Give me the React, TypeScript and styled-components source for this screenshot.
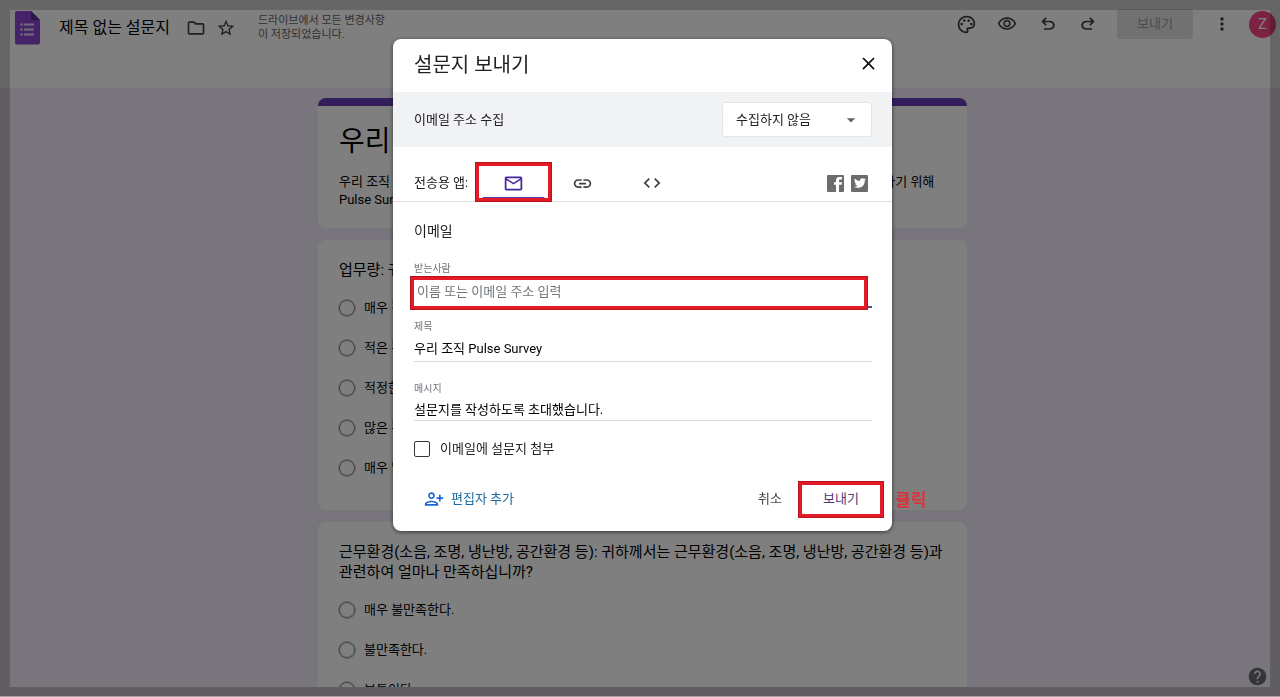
import React from "react";
import styled, { createGlobalStyle } from "styled-components";
import {
  MdArrowDropDown,
  MdClose,
  MdCode,
  MdHelp,
  MdLink,
  MdMoreVert,
  MdOutlineEmail,
  MdOutlineFolder,
  MdOutlinePalette,
  MdOutlineVisibility,
  MdStarBorder,
} from "react-icons/md";
import { FaTwitter } from "react-icons/fa";

const GlobalStyle = createGlobalStyle`
  *, *::before, *::after { box-sizing: border-box; }
  body {
    margin: 0;
    background: #f0ebf8;
    font-family: Roboto, "Noto Sans CJK KR", sans-serif;
    font-size: 13px;
    line-height: 20px;
    color: #202124;
  }
  button, input, select {
    font: inherit;
    color: inherit;
  }
  h1, h2, h3, p { margin: 0; font-weight: 400; }
`;

/* ---------- form editor ---------- */

const Page = styled.div`
  display: flex;
  flex-direction: column;
  height: 100vh;
  overflow: hidden;
`;

const Header = styled.header`
  display: flex;
  justify-content: space-between;
  align-items: flex-start;
  flex: none;
  height: 88px;
  padding: 0 4px 0 15px;
  background: #fff;
`;

const HeaderGroup = styled.div<{ $height: number }>`
  display: flex;
  align-items: center;
  height: ${(p) => p.$height}px;
`;

const DocTitle = styled.h1`
  margin: 0 11px 0 19px;
  font-size: 16px;
  line-height: 24px;
  color: #000;
`;

const IconButton = styled.button<{ $width?: number }>`
  display: flex;
  align-items: center;
  justify-content: center;
  width: ${(p) => p.$width ?? 30}px;
  height: 30px;
  padding: 0;
  border: 0;
  background: none;
  color: #3c4043;
`;

const SaveState = styled.p`
  width: 136px;
  margin-left: 17px;
  font-size: 11px;
  line-height: 14px;
  color: #5f6368;
`;

const HeaderSend = styled.button`
  width: 76px;
  height: 30px;
  margin: 0 14px 0 9px;
  padding: 0;
  border: 0;
  border-radius: 3px;
  background: #e2e2e2;
  color: #9a9a9a;
`;

const Avatar = styled.button`
  width: 27px;
  height: 27px;
  margin-left: 12px;
  padding: 0;
  border: 0;
  border-radius: 50%;
  background: #fb4587;
  color: #fff;
  font-size: 15px;
`;

const Main = styled.main`
  flex: 1;
  display: flex;
  flex-direction: column;
  align-items: center;
  gap: 12px;
  min-height: 0;
  margin-bottom: 10px;
  padding: 10px 0 0 5px;
  overflow: hidden;
`;

const Card = styled.section<{ $accent?: boolean }>`
  flex: none;
  width: 649px;
  max-width: 100%;
  padding: ${(p) => (p.$accent ? "14px 21px 19px" : "20px 21px 22px")};
  border-top: ${(p) => (p.$accent ? "8px solid #673ab7" : "0")};
  border-radius: 8px;
  background: #fff;
  color: #000;
`;

const FormTitle = styled.h2`
  margin-bottom: 9px;
  font-size: 28px;
  line-height: 44px;
`;

const FormDescription = styled.p`
  line-height: 18px;
`;

const Question = styled.h3`
  margin-bottom: 8px;
  font-size: 15px;
  line-height: 20px;
`;

const Option = styled.label`
  display: flex;
  align-items: center;
  gap: 9px;
  height: 40px;
`;

const Radio = styled.input`
  appearance: none;
  width: 16px;
  height: 16px;
  margin: 0;
  border: 1px solid #8a8a8a;
  border-radius: 50%;
  box-shadow: 0 0 0 1px #c4c4c4;
`;

const HelpButton = styled.button`
  position: fixed;
  right: 12px;
  bottom: 10px;
  display: flex;
  padding: 0;
  border: 0;
  background: none;
  color: #6a6a6e;
`;

/* ---------- overlay ---------- */

const Scrim = styled.div`
  position: fixed;
  inset: 0;
  display: flex;
  justify-content: center;
  align-items: flex-start;
  padding: 39px 0 0 5px;
  border-bottom: 1px solid #a5a3a8;
  background: rgba(0, 0, 0, 0.5);

  &::before {
    content: "";
    position: absolute;
    inset: 0;
    border: 10px solid rgba(0, 0, 0, 0.2);
    border-bottom-width: 9px;
    pointer-events: none;
  }
`;

const Dialog = styled.div`
  position: relative;
  width: 499px;
  max-width: 100%;
  border-radius: 8px;
  background: #fff;
  box-shadow: 0 1px 4px rgba(0, 0, 0, 0.6);
`;

const DialogHeader = styled.div`
  display: flex;
  align-items: flex-start;
  justify-content: space-between;
  height: 53px;
  padding: 9px 8px 0 21px;
`;

const DialogTitle = styled.h2`
  font-size: 20px;
  line-height: 34px;
`;

const CollectBar = styled.div`
  display: flex;
  align-items: center;
  justify-content: space-between;
  height: 55px;
  padding: 0 20px 0 21px;
  background: #f1f2f4;
`;

const SelectBox = styled.div`
  display: flex;
  position: relative;

  svg {
    position: absolute;
    top: 8px;
    right: 11px;
    color: #5f6368;
    pointer-events: none;
  }
`;

const Select = styled.select`
  appearance: none;
  width: 150px;
  height: 35px;
  padding: 0 30px 0 13px;
  border: 1px solid #e4e5e7;
  border-radius: 3px;
  background: #fff;
`;

const ViaBar = styled.div`
  display: flex;
  align-items: center;
  height: 55px;
  padding: 18px 24px 0 21px;
  border-bottom: 1px solid #e0e0e0;
`;

const Tabs = styled.div`
  display: flex;
  margin-left: 11px;
`;

const Tab = styled.button<{ $active?: boolean }>`
  position: relative;
  display: flex;
  align-items: center;
  justify-content: center;
  width: 69px;
  height: 36px;
  padding: 0;
  border: 0;
  background: none;
  color: ${(p) => (p.$active ? "#4527a0" : "#3c4043")};

  &::after {
    content: "";
    position: absolute;
    left: 3px;
    right: 3px;
    bottom: 2px;
    height: 2px;
    border-radius: 2px 2px 0 0;
    background: ${(p) => (p.$active ? "#5e35a5" : "transparent")};
  }
`;

/* Red marker drawn round the control that holds it. */
const Marker = styled.span<{ $inset: string }>`
  position: absolute;
  z-index: 1;
  inset: ${(p) => p.$inset};
  border: 4px solid #e31b26;
  outline: 1px solid #b5121f;
  outline-offset: -1px;
  pointer-events: none;
`;

const MarkerNote = styled.span`
  position: absolute;
  left: 94px;
  top: 6px;
  font-size: 17px;
  font-weight: 700;
  line-height: 20px;
  color: #d8343c;
  white-space: nowrap;
`;

const ShareLinks = styled.div`
  display: flex;
  gap: 7px;
  margin-left: auto;
`;

const ShareLink = styled.a`
  display: flex;
  align-items: center;
  justify-content: center;
  width: 17px;
  height: 17px;
  border-radius: 1px;
  background: #6c6c6c;
  color: #fff;
`;

const Panel = styled.form`
  display: flex;
  flex-direction: column;
  padding: 19px 20px 14px 21px;
`;

const PanelTitle = styled.h3`
  margin-bottom: 21px;
  font-size: 14px;
  line-height: 20px;
`;

const Field = styled.div<{ $gap: number }>`
  position: relative;
  display: flex;
  flex-direction: column;
  margin-bottom: ${(p) => p.$gap}px;
`;

const FieldLabel = styled.label`
  font-size: 10px;
  line-height: 14px;
  color: #70757a;
`;

const TextInput = styled.input<{ $height: number; $recipient?: boolean }>`
  width: 100%;
  height: ${(p) => p.$height}px;
  padding: ${(p) => (p.$recipient ? "0 0 0 3px" : "0")};
  border: 0;
  border-bottom: ${(p) => (p.$recipient ? "2px solid #5b4a8a" : "1px solid #dadada")};
  border-radius: 0;
  outline: 0;
  background: transparent;
  color: #000;

  &::placeholder {
    color: #70757a;
    opacity: 1;
  }
`;

const CheckRow = styled.label`
  display: flex;
  align-items: center;
  gap: 10px;
  height: 20px;
  margin-bottom: 22px;
`;

const Checkbox = styled.input`
  appearance: none;
  width: 16px;
  height: 16px;
  margin: 0;
  border: 1px solid #33363a;
  border-radius: 2px;
`;

const Actions = styled.div`
  display: flex;
  align-items: center;
  justify-content: space-between;
  margin-right: -9px;
`;

const ActionGroup = styled.div`
  display: flex;
  align-items: center;
`;

const TextButton = styled.button<{ $color: string }>`
  display: flex;
  align-items: center;
  gap: 7px;
  height: 36px;
  padding: 0 10px;
  border: 0;
  background: none;
  color: ${(p) => p.$color};
`;

const SendWrap = styled.div`
  position: relative;
  margin-left: 9px;
`;

const SendButton = styled.button`
  width: 80px;
  height: 31px;
  padding: 0;
  border: 1px solid #e8e8ea;
  border-radius: 3px;
  background: #fff;
  color: #4a3a78;
`;

const FormsLogo = () => (
  <svg width="25" height="34" viewBox="0 0 25 34" aria-label="설문지">
    <path d="M2 0h14l9 9v22.500a2 2 0 0 1-2 2H2a2 2 0 0 1-2-2V2a2 2 0 0 1 2-2z" fill="#8c47d2" />
    <path d="M16 0l9 9h-7a2 2 0 0 1-2-2z" fill="#5a2a98" />
    <g fill="#e2d8f2">
      <circle cx="6.500" cy="13.500" r="1.200" />
      <circle cx="6.500" cy="18.500" r="1.200" />
      <circle cx="6.500" cy="23.500" r="1.200" />
      <path d="M9 12.600h10v1.900H9zM9 17.600h10v1.900H9zM9 22.600h10v1.900H9z" />
    </g>
  </svg>
);

const UndoIcon = () => (
  <svg width="20" height="20" viewBox="0 -960 960 960" fill="currentColor">
    <path d="M280-200v-80h284q63 0 109.500-40T720-420q0-60-46.500-100T564-560H312l104 104-56 56-200-200 200-200 56 56-104 104h252q97 0 169.500 63T806-420q0 94-72.500 157T564-200H280Z" />
  </svg>
);

const RedoIcon = () => (
  <svg width="20" height="20" viewBox="0 -960 960 960" fill="currentColor">
    <path d="M396-200q-97 0-169.500-63T154-420q0-94 72.500-157T396-640h252L544-744l56-56 200 200-200 200-56-56 104-104H396q-63 0-109.500 40T240-420q0 60 46.500 100T396-280h284v80H396Z" />
  </svg>
);

const AddPersonIcon = () => (
  <svg width="20" height="20" viewBox="0 0 24 24" fill="#1967d2">
    <path d="M13 8c0-2.210-1.790-4-4-4S5 5.790 5 8s1.790 4 4 4 4-1.790 4-4zm-2 0c0 1.100-.9 2-2 2s-2-.9-2-2 .9-2 2-2 2 .9 2 2zM1 18v2h16v-2c0-2.660-5.330-4-8-4s-8 1.340-8 4zm2 0c.2-.71 3.300-2 6-2 2.690 0 5.780 1.280 6 2H3zm17-3v-3h3v-2h-3V7h-2v3h-3v2h3v3h2z" />
  </svg>
);

const FacebookIcon = () => (
  <svg width="17" height="17" viewBox="0 0 17 17" fill="#fff">
    <path d="M9 17V9.700H7V7.200h2V5.400C9 3.300 10.200 2 12.300 2H15v2.600h-1.700c-.9 0-1.300.4-1.300 1.200v1.400h3l-.4 2.500H12V17z" />
  </svg>
);

const workload = ["매우 적음", "적은 편", "적정한 편", "많은 편", "매우 많음"];
const satisfaction = ["매우 불만족한다.", "불만족한다.", "보통이다."];

const QuestionCard = ({ name, title, options }: { name: string; title: string; options: string[] }) => (
  <Card>
    <Question>{title}</Question>
    {options.map((text) => (
      <Option key={text}>
        <Radio type="radio" name={name} />
        {text}
      </Option>
    ))}
  </Card>
);

export default function App() {
  return (
    <>
      <GlobalStyle />
      <Page>
        <Header>
          <HeaderGroup $height={56}>
            <FormsLogo />
            <DocTitle>제목 없는 설문지</DocTitle>
            <IconButton aria-label="폴더로 이동">
              <MdOutlineFolder size={20} />
            </IconButton>
            <IconButton aria-label="별표">
              <MdStarBorder size={20} />
            </IconButton>
            <SaveState>드라이브에서 모든 변경사항이 저장되었습니다.</SaveState>
          </HeaderGroup>
          <HeaderGroup $height={48}>
            <IconButton $width={40} aria-label="테마 맞춤설정">
              <MdOutlinePalette size={21} />
            </IconButton>
            <IconButton $width={41} aria-label="미리보기">
              <MdOutlineVisibility size={20} />
            </IconButton>
            <IconButton $width={41} aria-label="실행취소">
              <UndoIcon />
            </IconButton>
            <IconButton $width={40} aria-label="다시 실행">
              <RedoIcon />
            </IconButton>
            <HeaderSend>보내기</HeaderSend>
            <IconButton aria-label="더보기">
              <MdMoreVert size={20} />
            </IconButton>
            <Avatar aria-label="계정">Z</Avatar>
          </HeaderGroup>
        </Header>

        <Main>
          <Card $accent>
            <FormTitle>우리 조직 Pulse Survey</FormTitle>
            <FormDescription>
              우리 조직 구성원의 업무 만족도와 근무환경에 대한 의견을 정기적으로 수집하고 더 나은 문화를 만들어가기 위해
              <br />
              Pulse Survey를 실시합니다.
            </FormDescription>
          </Card>
          <QuestionCard
            name="workload"
            title="업무량: 귀하의 업무량은 어느 정도입니까?"
            options={workload}
          />
          <QuestionCard
            name="environment"
            title="근무환경(소음, 조명, 냉난방, 공간환경 등): 귀하께서는 근무환경(소음, 조명, 냉난방, 공간환경 등)과 관련하여 얼마나 만족하십니까?"
            options={satisfaction}
          />
        </Main>
        <HelpButton aria-label="도움말">
          <MdHelp size={21} />
        </HelpButton>
      </Page>

      <Scrim>
        <Dialog role="dialog" aria-labelledby="send-title">
          <DialogHeader>
            <DialogTitle id="send-title">설문지 보내기</DialogTitle>
            <IconButton $width={32} aria-label="닫기">
              <MdClose size={21} color="#111" />
            </IconButton>
          </DialogHeader>

          <CollectBar>
            <label htmlFor="collect">이메일 주소 수집</label>
            <SelectBox>
              <Select id="collect" defaultValue="none">
                <option value="none">수집하지 않음</option>
                <option value="verified">인증됨</option>
              </Select>
              <MdArrowDropDown size={20} />
            </SelectBox>
          </CollectBar>

          <ViaBar>
            <span>전송용 앱:</span>
            <Tabs>
              <Tab $active aria-label="이메일">
                <MdOutlineEmail size={21} />
                <Marker $inset="-3px -4px -1px -4px" />
              </Tab>
              <Tab aria-label="링크">
                <MdLink size={21} />
              </Tab>
              <Tab aria-label="HTML 삽입">
                <MdCode size={20} />
              </Tab>
            </Tabs>
            <ShareLinks>
              <ShareLink href="#facebook" aria-label="Facebook">
                <FacebookIcon />
              </ShareLink>
              <ShareLink href="#twitter" aria-label="Twitter">
                <FaTwitter size={12} />
              </ShareLink>
            </ShareLinks>
          </ViaBar>

          <Panel onSubmit={(e: React.FormEvent) => e.preventDefault()}>
            <PanelTitle>이메일</PanelTitle>
            <Field $gap={12}>
              <FieldLabel htmlFor="to">받는사람</FieldLabel>
              <TextInput id="to" $height={32} $recipient autoFocus placeholder="이름 또는 이메일 주소 입력" />
              <Marker $inset="14px 4px -2px -4px" />
            </Field>
            <Field $gap={20}>
              <FieldLabel htmlFor="subject">제목</FieldLabel>
              <TextInput id="subject" $height={28} defaultValue="우리 조직 Pulse Survey" />
            </Field>
            <Field $gap={18}>
              <FieldLabel htmlFor="message">메시지</FieldLabel>
              <TextInput id="message" $height={25} defaultValue="설문지를 작성하도록 초대했습니다." />
            </Field>
            <CheckRow>
              <Checkbox type="checkbox" />
              이메일에 설문지 첨부
            </CheckRow>
            <Actions>
              <TextButton type="button" $color="#1c6a9c">
                <AddPersonIcon />
                편집자 추가
              </TextButton>
              <ActionGroup>
                <TextButton type="button" $color="#444746">
                  취소
                </TextButton>
                <SendWrap>
                  <SendButton type="submit">보내기</SendButton>
                  <Marker $inset="-3px" />
                  <MarkerNote>클릭</MarkerNote>
                </SendWrap>
              </ActionGroup>
            </Actions>
          </Panel>
        </Dialog>
      </Scrim>
    </>
  );
}
